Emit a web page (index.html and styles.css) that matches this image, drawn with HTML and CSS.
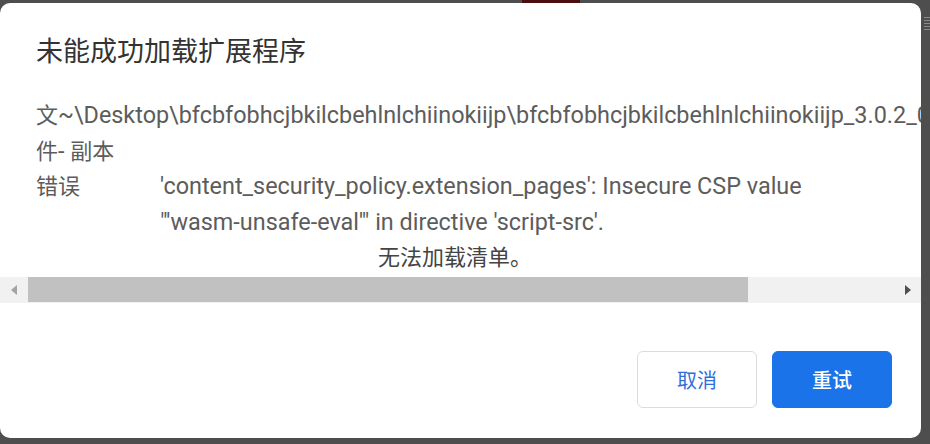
FILE: index.html
```html
<!DOCTYPE html>
<html lang="zh-CN">
<head>
<meta charset="utf-8">
<title>未能成功加载扩展程序</title>
<link rel="stylesheet" href="styles.css">
</head>
<body>
<div class="topstrip"><span class="blob"></span></div>
<div class="screen">
  <div class="dialog">
    <h1 class="title">未能成功加载扩展程序</h1>
    <div class="content">
      <div class="line"><span class="cjk">文</span>~\Desktop\bfcbfobhcjbkilcbehlnlchiinokiijp\bfcbfobhcjbkilcbehlnlchiinokiijp_3.0.2_0 - <span class="cjk">副本</span></div>
      <div class="line"><span class="cjk">件</span>- <span class="cjk">副本</span></div>
      <div class="error-row">
        <div class="label"><span class="cjk">错误</span></div>
        <div class="value">'content_security_policy.extension_pages': Insecure CSP value<br>"'wasm-unsafe-eval'" in directive 'script-src'.</div>
      </div>
      <div class="line manifest"><span class="cjk">无法加载清单。</span></div>
    </div>
    <div class="hscroll">
      <span class="arrow arrow-left"></span>
      <span class="thumb"></span>
      <span class="track-rest"></span>
      <span class="arrow arrow-right"></span>
    </div>
    <div class="footer">
      <button class="btn btn-cancel">取消</button>
      <button class="btn btn-retry">重试</button>
    </div>
  </div>
  <div class="side"><span class="side-mark"></span></div>
</div>
</body>
</html>
```
FILE: styles.css
```css
html, body {
  margin: 0;
  padding: 0;
}
body {
  width: 930px;
  height: 444px;
  background: #4e4e4e;
  overflow: hidden;
  font-family: Roboto, "Noto Sans CJK SC", sans-serif;
}
.topstrip {
  height: 3px;
  display: flex;
}
.blob {
  margin-left: 522px;
  width: 58px;
  height: 3px;
  background: #4a0e10;
}
.screen {
  display: flex;
}
.dialog {
  width: 921px;
  height: 435px;
  background: #fff;
  border-radius: 10px;
  overflow: hidden;
  display: flex;
  flex-direction: column;
}
.title {
  margin: 0;
  padding: 30px 0 0 36px;
  font-family: "Noto Sans CJK SC", sans-serif;
  font-size: 27px;
  line-height: 34px;
  font-weight: 400;
  color: #333;
}
.content {
  margin-top: 31px;
  padding-left: 36px;
  white-space: nowrap;
  overflow: hidden;
  font-size: 23.4px;
  line-height: 35.5px;
  color: #5c5c5c;
}
.line {
  height: 35.5px;
}
.cjk {
  font-family: "Noto Sans CJK SC", sans-serif;
  font-size: 22px;
  line-height: 1;
}
.error-row {
  display: flex;
  height: 71px;
}
.label {
  width: 124px;
  flex: none;
}
.manifest {
  padding-left: 342px;
  color: #444;
}
.hscroll {
  margin-top: 1px;
  height: 26px;
  background: #f1f1f1;
  display: flex;
  align-items: center;
}
.arrow {
  width: 0;
  height: 0;
  border-top: 5px solid transparent;
  border-bottom: 5px solid transparent;
}
.arrow-left {
  margin: 0 11px 0 11px;
  border-right: 6px solid #a3a3a3;
}
.arrow-right {
  margin: 0 10px 0 0;
  border-left: 6px solid #505050;
}
.thumb {
  width: 720px;
  height: 25px;
  background: #c1c1c1;
}
.track-rest {
  flex: 1;
}
.footer {
  margin-top: auto;
  display: flex;
  justify-content: flex-end;
  gap: 15px;
  padding: 0 29px 30px 0;
}
.btn {
  width: 120px;
  height: 57px;
  border-radius: 6px;
  font-family: "Noto Sans CJK SC", sans-serif;
  font-size: 20px;
  cursor: pointer;
}
.btn-cancel {
  background: #fff;
  border: 1px solid #dadce0;
  color: #2d6fd9;
}
.btn-retry {
  background: #1a73e8;
  border: 1px solid #1a73e8;
  color: #fff;
  font-weight: 500;
}
.side {
  flex: 1;
  display: flex;
  flex-direction: column;
  padding: 14px 0 0 3px;
}
.side-mark {
  width: 6px;
  height: 14px;
  background: repeating-linear-gradient(#8a8a8a 0 1px, transparent 1px 3px);
}
```
